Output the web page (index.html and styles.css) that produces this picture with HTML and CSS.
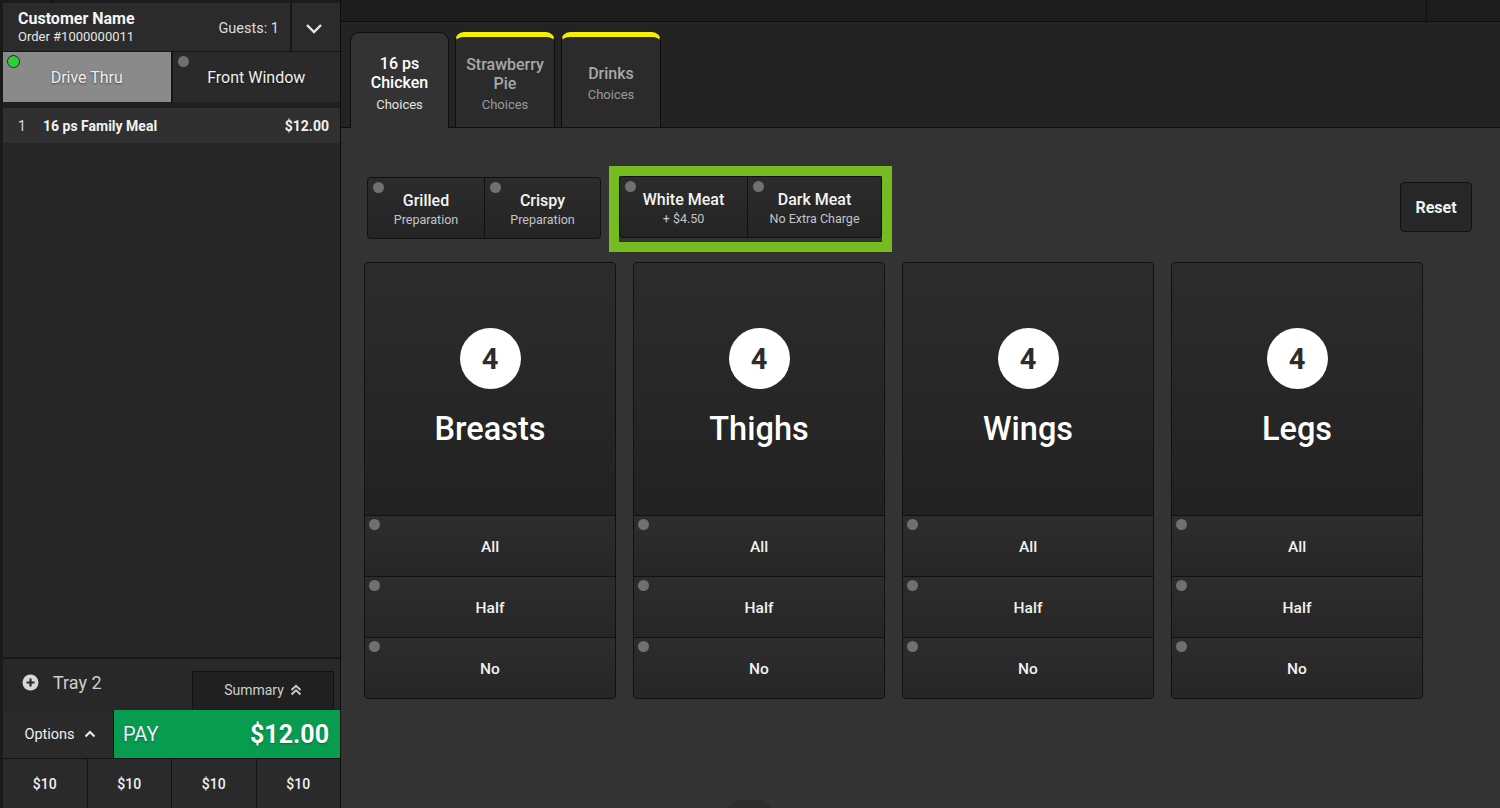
FILE: index.html
```html
<!DOCTYPE html>
<html>
<head>
<meta charset="utf-8">
<link rel="stylesheet" href="styles.css">
</head>
<body>
<div class="app">
  <aside class="left">
    <div class="topstrip"><span class="ts-div"></span></div>
    <div class="header">
      <div class="cust">
        <div class="cust-name">Customer Name</div>
        <div class="order-no">Order #1000000011</div>
      </div>
      <div class="guests">Guests: 1</div>
      <div class="chev">
        <svg width="18" height="12" viewBox="0 0 18 12"><polyline points="2,3 9,10 16,3" fill="none" stroke="#e8e8e8" stroke-width="2.4"/></svg>
      </div>
    </div>
    <div class="dine">
      <div class="dine-btn active"><span class="dot green"></span>Drive Thru</div>
      <div class="dine-btn"><span class="dot"></span>Front Window</div>
    </div>
    <div class="items">
      <div class="item">
        <span class="qty">1</span>
        <span class="iname">16 ps Family Meal</span>
        <span class="iprice">$12.00</span>
      </div>
    </div>
    <div class="tray-row">
      <div class="tray">
        <svg width="17" height="17" viewBox="0 0 17 17"><circle cx="8.5" cy="8.5" r="8" fill="#d8d8d8"/><path d="M8.5 4.5v8M4.5 8.5h8" stroke="#2a2a2a" stroke-width="2.2"/></svg>
        <span>Tray 2</span>
      </div>
      <div class="summary">Summary
        <svg width="12" height="12" viewBox="0 0 12 12"><polyline points="1.5,6 6,1.8 10.5,6" fill="none" stroke="#d0d0d0" stroke-width="1.8"/><polyline points="1.5,10.5 6,6.3 10.5,10.5" fill="none" stroke="#d0d0d0" stroke-width="1.8"/></svg>
      </div>
    </div>
    <div class="pay-row">
      <div class="options">Options
        <svg width="12" height="8" viewBox="0 0 12 8"><polyline points="1.5,6.5 6,2 10.5,6.5" fill="none" stroke="#eee" stroke-width="2"/></svg>
      </div>
      <div class="pay"><span class="pay-label">PAY</span><span class="pay-amt">$12.00</span></div>
    </div>
    <div class="cash-row">
      <div class="cash">$10</div>
      <div class="cash">$10</div>
      <div class="cash">$10</div>
      <div class="cash">$10</div>
    </div>
  </aside>

  <main class="right">
    <div class="rtop"><span class="rtop-div"></span></div>
    <div class="tabbar">
      <div class="tab active"><div class="tab-title">16 ps<br>Chicken</div><div class="tab-sub">Choices</div></div>
      <div class="tab flag"><div class="tab-title">Strawberry<br>Pie</div><div class="tab-sub">Choices</div></div>
      <div class="tab flag"><div class="tab-title">Drinks</div><div class="tab-sub">Choices</div></div>
    </div>
    <div class="content">
      <div class="opt-row">
        <div class="seg seg-prep">
          <div class="seg-btn w117"><span class="dot"></span><div class="seg-title">Grilled</div><div class="seg-sub">Preparation</div></div>
          <div class="seg-btn w116"><span class="dot"></span><div class="seg-title">Crispy</div><div class="seg-sub">Preparation</div></div>
        </div>
        <div class="highlight">
          <div class="seg">
            <div class="seg-btn w129"><span class="dot"></span><div class="seg-title">White Meat</div><div class="seg-sub">+ $4.50</div></div>
            <div class="seg-btn w134"><span class="dot"></span><div class="seg-title">Dark Meat</div><div class="seg-sub">No Extra Charge</div></div>
          </div>
        </div>
        <div class="reset">Reset</div>
      </div>
      <div class="cards">
        <div class="card">
          <div class="card-top"><div class="badge">4</div><div class="card-name">Breasts</div></div>
          <div class="card-opt"><span class="dot"></span>All</div>
          <div class="card-opt"><span class="dot"></span>Half</div>
          <div class="card-opt"><span class="dot"></span>No</div>
        </div>
        <div class="card">
          <div class="card-top"><div class="badge">4</div><div class="card-name">Thighs</div></div>
          <div class="card-opt"><span class="dot"></span>All</div>
          <div class="card-opt"><span class="dot"></span>Half</div>
          <div class="card-opt"><span class="dot"></span>No</div>
        </div>
        <div class="card">
          <div class="card-top"><div class="badge">4</div><div class="card-name">Wings</div></div>
          <div class="card-opt"><span class="dot"></span>All</div>
          <div class="card-opt"><span class="dot"></span>Half</div>
          <div class="card-opt"><span class="dot"></span>No</div>
        </div>
        <div class="card">
          <div class="card-top"><div class="badge">4</div><div class="card-name">Legs</div></div>
          <div class="card-opt"><span class="dot"></span>All</div>
          <div class="card-opt"><span class="dot"></span>Half</div>
          <div class="card-opt"><span class="dot"></span>No</div>
        </div>
      </div>
      <div class="pull"></div>
    </div>
  </main>
</div>
</body>
</html>
```

FILE: styles.css
```css
* { box-sizing: border-box; }
html, body { margin: 0; padding: 0; }
body {
  width: 1500px;
  height: 808px;
  overflow: hidden;
  background: #1a1a1a;
  font-family: Roboto, "Noto Sans", "Liberation Sans", sans-serif;
  color: #fff;
}
.app { display: flex; height: 808px; }

/* LEFT PANEL */
.left {
  width: 340px;
  flex: none;
  display: flex;
  flex-direction: column;
  padding-left: 3px;
  background: #1a1a1a;
}
.topstrip { height: 3px; background: #1c1c1c; position: relative; }
.ts-div { position: absolute; left: 49px; top: 0; width: 1px; height: 3px; background: #0e0e0e; }
.header {
  height: 49px;
  display: flex;
  align-items: center;
  background: #2b2b2b;
  border-bottom: 1px solid #161616;
}
.cust { flex: 1; padding-left: 15px; }
.cust-name { font-size: 16px; font-weight: 700; line-height: 19px; color: #f4f4f4; }
.order-no { font-size: 13px; line-height: 16px; color: #e6e6e6; margin-top: 1px; }
.guests { font-size: 14.5px; color: #dcdcdc; padding-right: 11px; padding-top: 2px; }
.chev {
  width: 50px;
  height: 100%;
  border-left: 2px solid #151515;
  display: flex;
  align-items: center;
  justify-content: center;
  padding-top: 2px;
  padding-right: 4px;
}
.dine { height: 50px; display: flex; background: #151515; }
.dine-btn {
  position: relative;
  flex: 1;
  display: flex;
  align-items: center;
  justify-content: center;
  font-size: 16px;
  color: #f0f0f0;
  background: #2a2a2a;
  text-shadow: 0 1px 2px rgba(0,0,0,0.5);
  padding-top: 1px;
}
.dine-btn + .dine-btn { margin-left: 2px; }
.dine-btn.active { background: #8a8a8a; color: #eeeeee; }
.dot {
  position: absolute;
  left: 5px;
  top: 4px;
  width: 11px;
  height: 11px;
  border-radius: 50%;
  background: #707070;
}
.dot.green { background: #2fcf3a; box-shadow: 0 0 0 1px #1a3a1a; }
.items {
  flex: 1;
  background: #262626;
  border-top: 6px solid #202020;
  border-bottom: 2px solid #161616;
}
.item {
  height: 35px;
  display: flex;
  align-items: center;
  background: #303030;
  padding: 0 11px 0 15px;
  font-size: 14px;
}
.qty { width: 25px; color: #dcdcdc; }
.iname { flex: 1; font-weight: 700; color: #f2f2f2; }
.iprice { font-weight: 700; color: #f2f2f2; }
.tray-row {
  height: 51px;
  display: flex;
  align-items: flex-end;
  background: #282828;
}
.tray {
  flex: 1;
  height: 100%;
  display: flex;
  align-items: center;
  gap: 14px;
  padding-left: 19px;
  font-size: 18px;
  color: #cfcfcf;
  padding-bottom: 4px;
}
.summary {
  width: 142px;
  height: 39px;
  margin-right: 6px;
  background: #202020;
  border: 1px solid #121212;
  border-bottom: none;
  display: flex;
  align-items: center;
  justify-content: center;
  gap: 6px;
  font-size: 14px;
  color: #cfcfcf;
  padding-bottom: 2px;
}
.pay-row { height: 48px; display: flex; }
.options {
  width: 111px;
  display: flex;
  align-items: center;
  justify-content: center;
  gap: 9px;
  background: #2a2a2a;
  border-right: 1px solid #121212;
  font-size: 14.5px;
  color: #eeeeee;
  padding-left: 4px;
}
.pay {
  flex: 1;
  display: flex;
  align-items: center;
  justify-content: space-between;
  background: #079c50;
  padding: 0 11px 0 9px;
  text-shadow: 0 1px 2px rgba(0,0,0,0.3);
}
.pay-label { font-size: 20px; color: #eef; }
.pay-amt { font-size: 25px; font-weight: 700; color: #fff; }
.cash-row { height: 50px; display: flex; background: #121212; gap: 1px; border-top: 1px solid #121212; }
.cash {
  flex: 1;
  display: flex;
  align-items: center;
  justify-content: center;
  background: #2a2a2a;
  font-size: 14px;
  font-weight: 500;
  color: #f0f0f0;
}

/* RIGHT PANEL */
.right {
  flex: 1;
  display: flex;
  flex-direction: column;
  border-left: 1px solid #0e0e0e;
}
.rtop {
  height: 22px;
  background: #1c1c1c;
  border-bottom: 1px solid #0e0e0e;
  position: relative;
}
.rtop-div { position: absolute; right: 73px; top: 0; width: 1px; height: 21px; background: #0e0e0e; }
.tabbar {
  height: 106px;
  background: #232323;
  display: flex;
  align-items: flex-end;
  gap: 6px;
  padding-left: 9px;
  border-bottom: 1px solid #0e0e0e;
}
.tab {
  width: 100px;
  height: 95px;
  border: 1px solid #0e0e0e;
  border-bottom: none;
  border-radius: 9px 9px 0 0;
  background: #2b2b2b;
  display: flex;
  flex-direction: column;
  align-items: center;
  justify-content: center;
  text-align: center;
  padding-top: 6px;
  color: #a8a8a8;
}
.tab.active {
  width: 99px;
  height: 96px;
  margin-bottom: -1px;
  background: #333333;
  color: #ffffff;
}
.tab.flag { border-top: 5px solid #f6f000; padding-top: 3px; }
.tab-title { font-size: 16px; font-weight: 500; line-height: 19px; }
.tab-sub { font-size: 13px; line-height: 16px; margin-top: 5px; color: #999; }
.tab.active .tab-sub { color: #e4e4e4; }
.tab.flag .tab-sub { margin-top: 4px; }

.content {
  flex: 1;
  background: #333333;
  position: relative;
  padding: 38px 0 0 23px;
}
.opt-row { display: flex; align-items: flex-start; height: 88px; }
.seg {
  display: flex;
  height: 62px;
  border: 1px solid #111;
  border-radius: 4px;
  background: #111;
  gap: 1px;
  overflow: hidden;
}
.seg-prep { margin: 11px 0 0 3px; }
.seg-btn {
  position: relative;
  display: flex;
  flex-direction: column;
  align-items: center;
  justify-content: center;
  background: linear-gradient(#2c2c2c, #242424);
  padding-top: 2px;
}
.w117 { width: 116px; }
.w116 { width: 115px; }
.w129 { width: 127px; }
.w134 { width: 133px; }
.seg-title { font-size: 16px; font-weight: 500; color: #f4f4f4; line-height: 19px; }
.seg-sub { font-size: 12.5px; color: #c4c4c4; line-height: 15px; margin-top: 2px; }
.highlight {
  margin-left: 8px;
  border: 10px solid #76bc21;
  padding: 0 0 4px 0;
}
.reset {
  margin: 16px 28px 0 auto;
  width: 72px;
  height: 50px;
  border: 1px solid #121212;
  border-radius: 4px;
  background: #272727;
  display: flex;
  align-items: center;
  justify-content: center;
  font-size: 16px;
  font-weight: 700;
  color: #f2f2f2;
}
.cards { display: flex; gap: 17px; margin-top: 8px; }
.card {
  width: 252px;
  border: 1px solid #111;
  border-radius: 4px;
  overflow: hidden;
  background: #111;
  display: flex;
  flex-direction: column;
  gap: 1px;
}
.card-top {
  height: 252px;
  background: linear-gradient(#2c2c2c, #222222);
  display: flex;
  flex-direction: column;
  align-items: center;
  padding-top: 65px;
}
.badge {
  width: 61px;
  height: 61px;
  border-radius: 50%;
  background: #ffffff;
  color: #2c2c2c;
  font-size: 29px;
  font-weight: 700;
  display: flex;
  align-items: center;
  justify-content: center;
}
.card-name {
  margin-top: 21px;
  font-size: 32.5px;
  font-weight: 500;
  color: #ffffff;
  line-height: 38px;
}
.card-opt {
  position: relative;
  height: 60px;
  display: flex;
  align-items: center;
  justify-content: center;
  background: linear-gradient(#2d2d2d, #262626);
  font-size: 15.5px;
  font-weight: 500;
  color: #f2f2f2;
  padding-top: 2px;
}
.card-opt .dot { left: 4px; top: 3px; }
.pull {
  position: absolute;
  left: 387px;
  bottom: -6px;
  width: 43px;
  height: 14px;
  border-radius: 12px 12px 0 0;
  background: #2c2c2c;
}
```
